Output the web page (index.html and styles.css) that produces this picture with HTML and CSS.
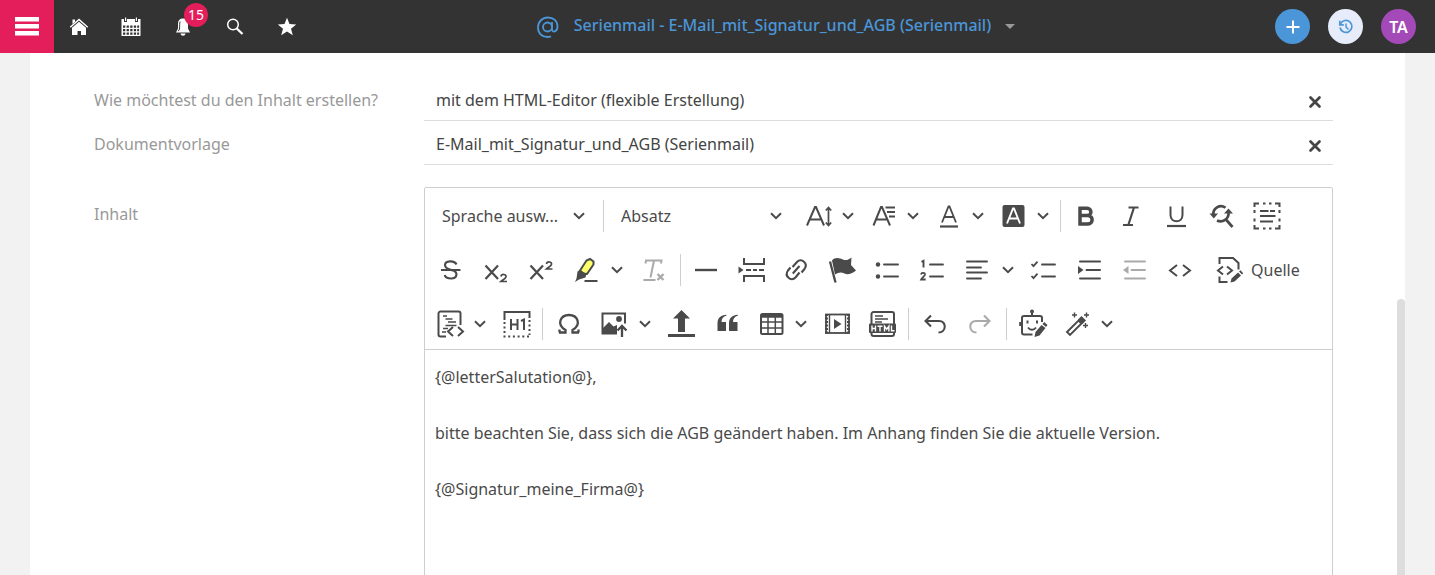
FILE: index.html
```html
<!DOCTYPE html>
<html lang="de">
<head>
<meta charset="utf-8">
<meta name="viewport" content="width=device-width, initial-scale=1">
<title>Serienmail</title>
<link rel="stylesheet" href="styles.css">
</head>
<body>
<svg class="defs" aria-hidden="true">
  <symbol id="chev" viewBox="0 0 12 8"><path d="M1 1.2l5 5 5-5" fill="none" stroke="currentColor" stroke-width="2"/></symbol>
  <symbol id="close" viewBox="0 0 14 14"><path d="M2.500 2.500l9 9M11.500 2.500l-9 9" fill="none" stroke="currentColor" stroke-width="2.700" stroke-linecap="round"/></symbol>
</svg>

<header class="topbar">
  <nav class="nav" aria-label="Hauptnavigation">
    <button class="menu" aria-label="Menü"><svg width="24" height="20" viewBox="0 0 24 20"><path d="M0 0h24v4.500H0zM0 7h24v4.500H0zM0 14h24v4.500H0z" fill="#fff"/></svg></button>
    <button class="navbtn" aria-label="Startseite"><svg width="20" height="20" viewBox="0 0 20 20" fill="#fff"><path d="M0.800 9.800L10 1.500l9.200 8.300-.9 1L10 3.500 1.700 10.800z"/><path d="M3.500 2.500h2.500v2.500L3.500 7z"/><path d="M3 10.800l7-6.100 7 6.100V18h-5v-4H8.500v4H3z"/></svg></button>
    <button class="navbtn" aria-label="Kalender"><svg width="20" height="20" viewBox="0 0 20 20" fill="#fff"><path fill-rule="evenodd" d="M0.500 2H3v3h3V2h8v3h3V2h2.500v17h-19zM2 8.500v2.300h2.300V8.500zM5.600 8.500v2.300h2.300V8.500zM9.200 8.500v2.300h2.300V8.500zM12.800 8.500v2.300h2.300V8.500zM16.200 8.500v2.300h1.900V8.500zM2 12v2.300h2.300V12zM5.600 12v2.300h2.300V12zM9.200 12v2.300h2.300V12zM12.800 12v2.300h2.300V12zM16.200 12v2.300h1.900V12zM2 15.500v2.200h2.300v-2.200zM5.600 15.500v2.200h2.300v-2.200zM9.200 15.500v2.200h2.300v-2.200zM12.800 15.500v2.200h2.300v-2.200zM16.200 15.500v2.200h1.900v-2.200z"/><path d="M4 .5h1.200v3.500H4zM14.800.5H16v3.500h-1.200z"/></svg></button>
    <button class="navbtn" aria-label="Benachrichtigungen, 15 neu"><svg width="20" height="20" viewBox="0 0 20 20"><path d="M9 1.500c-2.500.4-4 2.500-4 5v5L3 15.500h14l-2-4v-5c0-2.500-1.500-4.600-4-5z" fill="#fff"/><path d="M7.200 4.500C6.400 6 6.800 9 6.500 12l-1.200 2.200" fill="none" stroke="#333"/><path d="M7.500 16.500h5c-.3 3-4.700 3-5 0z" fill="#fff"/></svg><span class="count">15</span></button>
    <button class="navbtn" aria-label="Suche"><svg width="20" height="20" viewBox="0 0 20 20" fill="none" stroke="#fff"><circle cx="8" cy="7.500" r="5.300" stroke-width="1.500"/><path d="M11.800 11.500l5.700 5.500" stroke-width="2.300"/></svg></button>
    <button class="navbtn" aria-label="Favoriten"><svg width="20" height="20" viewBox="0 0 20 20"><path d="M10 .8l2.500 6.200 6.700.4-5.200 4.300 1.800 6.500L10 14.600l-5.800 3.600L6 11.700.8 7.400 7.500 7z" fill="#fff"/></svg></button>
  </nav>
  <button class="title"><svg width="24" height="24" viewBox="0 0 24 24" fill="none" stroke="currentColor" stroke-width="1.800"><circle cx="11.500" cy="12" r="4.500"/><path d="M16 7v7.500c0 3.500 5.500 2.500 5.500-3C21.500 6 17.500 2.500 12 2.500S2 6.500 2 12.500s4 9.500 9.500 9.500c1.500 0 2.500-.3 3.500-.7"/></svg><span>Serienmail - E-Mail_mit_Signatur_und_AGB (Serienmail)</span><svg width="10" height="5" viewBox="0 0 10 5"><path d="M0 0h10L5 5z" fill="#999"/></svg></button>
  <div class="actions">
    <button class="round add" aria-label="Neu"><svg width="14" height="14" viewBox="0 0 14 14"><path d="M7 .5v13M.5 7h13" stroke="#fff" stroke-width="2"/></svg></button>
    <button class="round history" aria-label="Verlauf"><svg width="16" height="16" viewBox="0 0 16 16" fill="none" stroke="#4a96d9"><path d="M2.500 4.800A6 6 0 1 1 2 8.500" stroke-width="1.700"/><path d="M1.800 1.800v4h4" stroke-width="1.700"/><path d="M8 4.500V8l2.500 2.500" stroke-width="1.500"/></svg></button>
    <button class="round user">TA</button>
  </div>
</header>

<main class="sheet">
  <form class="form">
    <div class="row">
      <label for="mode">Wie möchtest du den Inhalt erstellen?</label>
      <div class="field"><input id="mode" type="text" value="mit dem HTML-Editor (flexible Erstellung)"><button type="button" class="clear" aria-label="Auswahl löschen"><svg width="14" height="14"><use href="#close"/></svg></button></div>
    </div>
    <div class="row">
      <label for="tpl">Dokumentvorlage</label>
      <div class="field"><input id="tpl" type="text" value="E-Mail_mit_Signatur_und_AGB (Serienmail)"><button type="button" class="clear" aria-label="Vorlage löschen"><svg width="14" height="14"><use href="#close"/></svg></button></div>
    </div>
    <div class="row content">
      <label for="body">Inhalt</label>
      <div class="editor">
        <div class="toolbar" role="toolbar" aria-label="Editor">
          <div class="pick lang"><select aria-label="Sprache auswählen"><option>Sprache ausw...</option></select><svg class="chev"><use href="#chev"/></svg></div>
          <span class="sep"></span>
          <div class="pick style"><select aria-label="Absatzformat"><option>Absatz</option></select><svg class="chev"><use href="#chev"/></svg></div>
          <button type="button" class="tool drop" aria-label="Schriftgröße"><svg class="ico" viewBox="0 0 28 28"><path d="M2 23.500L10 5h1l8 18.500M5 17.500h11" stroke-width="2"/><path d="M23.500 6v17M20.800 8.500L23.500 5.500l2.700 3M20.800 20.500l2.700 3 2.700-3" stroke-width="1.700"/></svg><svg class="chev"><use href="#chev"/></svg></button>
          <button type="button" class="tool drop" aria-label="Schriftart"><svg class="ico" viewBox="0 0 28 28"><path d="M3.500 23.500L11 5h1l8 18.500M6.500 17.500h11" stroke-width="2"/><path d="M15.500 5.500H25M17 10h8M19 14.500h6" stroke-width="2"/></svg><svg class="chev"><use href="#chev"/></svg></button>
          <button type="button" class="tool drop" aria-label="Schriftfarbe"><svg class="ico" viewBox="0 0 28 28"><path d="M7 20.500L13.500 4.500h1L21 20.500M9.500 15h9" stroke-width="1.800"/><path d="M5 24.500h18" stroke-width="2.200"/></svg><svg class="chev"><use href="#chev"/></svg></button>
          <button type="button" class="tool drop" aria-label="Hintergrundfarbe"><svg class="ico" viewBox="0 0 28 28"><rect x="2.500" y="3" width="22" height="22" rx="2" class="f"/><path d="M7 21.500L13 6.500h1l6 15M9 16.500h9" style="stroke:#fff" stroke-width="1.900"/></svg><svg class="chev"><use href="#chev"/></svg></button>
          <span class="sep"></span>
          <button type="button" class="tool" aria-label="Fett"><svg class="ico" viewBox="0 0 28 28"><path d="M5.500 6.300h8.500c5.200 0 5.200 7.200 0 7.200H6.500M6.500 13.500H15c5.500 0 5.500 8.500 0 8.500H5.500M7 4.700v18.900" stroke-width="3.500"/></svg></button>
          <button type="button" class="tool" aria-label="Kursiv"><svg class="ico" viewBox="0 0 28 28"><path d="M10.500 5.500h10M5 23h10M16 5.500L10.300 23" stroke-width="2.200"/></svg></button>
          <button type="button" class="tool" aria-label="Unterstrichen"><svg class="ico" viewBox="0 0 28 28"><path d="M7.500 4.500v8.500c0 8.300 12 8.300 12 0V4.500" stroke-width="2"/><path d="M4 24h19" stroke-width="2.200"/></svg></button>
          <button type="button" class="tool" aria-label="Suchen und ersetzen"><svg class="ico" viewBox="0 0 28 28"><path d="M5.500 13A7.500 7.500 0 0 1 17.500 5.800M20.500 10.500A8 8 0 0 1 9 18.500M17.500 17l7 8" stroke-width="2.700"/><path d="M1.500 11.500h8.500L5.800 16.500zM16 11.500l4.500-5 4.500 5z" class="f"/></svg></button>
          <button type="button" class="tool" aria-label="Alles auswählen"><svg class="ico" viewBox="0 0 28 28"><path d="M1.500 5V1.500H6M22 1.500h4.500V5M26.500 23v3.500H22M6 26.500H1.500V23M10 1.500h2.500M16 1.500h2.500M10 26.500h2.500M16 26.500h2.500M1.500 8v3M1.500 16.500v3M26.500 8v3M26.500 16.500v3" stroke-width="2"/><path d="M7 9h8.500M17 9h5M7 14h15.500M7 19.500h13" stroke-width="2"/></svg></button>

          <button type="button" class="tool" aria-label="Durchgestrichen"><svg class="ico" viewBox="0 0 28 28"><path d="M19.500 8.500C17.500 4 8 4.500 8 9c0 3.500 4 4.500 7 5.200 7 1.800 5 8.300-.8 8.300-4 0-6-1.500-6.500-3.500" stroke-width="2.100"/><path d="M4 14h19.500" stroke-width="2"/></svg></button>
          <button type="button" class="tool" aria-label="Tiefgestellt"><svg class="ico" viewBox="0 0 28 28"><path d="M3.500 9.500l12.500 13.500M16 9.500L3.500 23" stroke-width="2.200"/><path d="M19 20.500c.5-3 5.500-2.500 5 .3-.3 1.700-3 3-5 4.700h6" stroke-width="1.700"/></svg></button>
          <button type="button" class="tool" aria-label="Hochgestellt"><svg class="ico" viewBox="0 0 28 28"><path d="M3.500 9.500l12.500 13.500M16 9.500L3.500 23" stroke-width="2.200"/><path d="M19.500 8c.5-3 5.500-2.500 5 .3-.3 1.700-3 3-5 4.700h6" stroke-width="1.700"/></svg></button>
          <div class="split"><button type="button" class="tool" aria-label="Hervorheben"><svg class="ico" viewBox="0 0 28 28"><path d="M8 14.500L14.500 4.500l3.500-1.500 3.500 2.500v3L15 18l-4-.5z" style="fill:#fdff6b" stroke-width="2"/><path d="M5.500 15.500l2.500-1.500 6.500 4-1 3.500-6.500 2-4 2.500 1.500-3.500z" class="f"/><path d="M12.500 25h13" stroke-width="2"/></svg></button><button type="button" class="tool arrow" aria-label="Hervorheben Optionen"><svg class="chev"><use href="#chev"/></svg></button></div>
          <button type="button" class="tool off" aria-label="Formatierung entfernen" disabled><svg class="ico" viewBox="0 0 28 28"><path d="M5.500 7.500l.5-3h15.500l-.5 3M14 4.500l-3.500 17M3.500 24h12" stroke-width="2"/><path d="M17.500 18l6 6M23.500 18l-6 6" stroke-width="2.400"/></svg></button>
          <span class="sep"></span>
          <button type="button" class="tool" aria-label="Horizontale Linie"><svg class="ico" viewBox="0 0 28 28"><path d="M2 14h22" stroke-width="2.400"/></svg></button>
          <button type="button" class="tool" aria-label="Seitenumbruch"><svg class="ico" viewBox="0 0 28 28"><path d="M6 2v6h20V2M6 26v-6h20v6" stroke-width="2"/><path d="M8 14h5M15 14h4M21 14h5" stroke-width="2"/><path d="M0.500 10.500L5.500 14l-5 3.500z" class="f"/></svg></button>
          <button type="button" class="tool" aria-label="Link"><svg class="ico" viewBox="0 0 28 28"><path d="M9.500 11l4.500-5c4.500-4.500 11.500 1.500 7.500 7l-3 3.500M16.500 16.500L12.500 21.500C8 26 1 20 5 14.500l2.500-3M9.800 17.500l6.700-7.500" stroke-width="2.100"/></svg></button>
          <button type="button" class="tool" aria-label="Textmarke"><svg class="ico" viewBox="0 0 28 28"><path d="M2 5.500L7.500 26.500" stroke-width="2.300"/><path d="M4 4.500C7 .5 12 2 15 3.500s6 0 8.500-2L23 9l5 5.500c-5 4-9 4.500-12 2.800s-6-.8-9 1.200z" class="f"/></svg></button>
          <button type="button" class="tool" aria-label="Aufzählung"><svg class="ico" viewBox="0 0 28 28"><circle cx="5" cy="8.500" r="2.200" class="f"/><circle cx="5" cy="20.500" r="2.200" class="f"/><path d="M11 8.500h14M11 20.500h14" stroke-width="1.900" stroke-linecap="round"/></svg></button>
          <button type="button" class="tool" aria-label="Nummerierte Liste"><svg class="ico" viewBox="0 0 28 28"><path d="M3.500 5.800l2-1v6.700" stroke-width="1.900"/><path d="M3 18.500c.5-2.500 4.500-2 3.900.3-.4 1.400-2.500 2.500-3.700 4.700h4.500" stroke-width="1.800"/><path d="M12 8.500h13M12 20.500h13" stroke-width="1.900" stroke-linecap="round"/></svg></button>
          <div class="split"><button type="button" class="tool" aria-label="Ausrichtung"><svg class="ico" viewBox="0 0 28 28"><path d="M4 5.500h20M4 11.500h14M4 16.500h20M4 22.500h14" stroke-width="1.900" stroke-linecap="round"/></svg></button><button type="button" class="tool arrow" aria-label="Ausrichtung Optionen"><svg class="chev"><use href="#chev"/></svg></button></div>
          <button type="button" class="tool" aria-label="Aufgabenliste"><svg class="ico" viewBox="0 0 28 28"><path d="M0.500 8l2 2.200 4-4.500M0.500 20l2 2.200 4-4.500" stroke-width="1.800"/><path d="M11 8.500h13M11 20.500h13" stroke-width="1.900" stroke-linecap="round"/></svg></button>
          <button type="button" class="tool" aria-label="Einzug vergrößern"><svg class="ico" viewBox="0 0 28 28"><path d="M4 5.500h20M10.500 14H24M4 22.500h20" stroke-width="2" stroke-linecap="round"/><path d="M2 10l5.500 4L2 18z" class="f"/></svg></button>
          <button type="button" class="tool off" aria-label="Einzug verkleinern" disabled><svg class="ico" viewBox="0 0 28 28"><path d="M4 5.500h20M10.500 14H24M4 22.500h20" stroke-width="2" stroke-linecap="round"/><path d="M7.500 10L2 14l5.500 4z" class="f"/></svg></button>
          <button type="button" class="tool" aria-label="Code"><svg class="ico" viewBox="0 0 28 28"><path d="M11 9l-7 5.500 7 5.500M17 9l7 5.500-7 5.500" stroke-width="2"/></svg></button>
          <button type="button" class="tool source"><svg class="ico" viewBox="0 0 28 28"><path d="M4.500 8V2H18l5.500 5v6.500M4.500 20.500V26h8" stroke-width="2"/><path d="M8 10.500l-5 4 5 4M12 10.500l5 4-5 4" stroke-width="2"/><path d="M15.500 26.500l1-4 6.500-6 3 3-6.500 6zM24 15.500l1.500-1.200 2.700 2.900-1.200 1.300z" class="f"/></svg><span>Quelle</span></button>

          <button type="button" class="tool drop" aria-label="Codeblock"><svg class="ico" viewBox="0 0 28 28"><path d="M9 26.500H3.500a2 2 0 0 1-2-2v-21a2 2 0 0 1 2-2h18a2 2 0 0 1 2 2V15" stroke-width="2"/><path d="M6 6h4M8.500 9h7M11 12h8M8.500 15.500h11M6 18.500h5M5 22h4" stroke-width="1.600"/><path d="M16 17l-5 4.500 5 4.500M21 17l5 4.500-5 4.500" stroke-width="2"/></svg><svg class="chev"><use href="#chev"/></svg></button>
          <button type="button" class="tool" aria-label="Blöcke anzeigen"><svg class="ico" viewBox="0 0 28 28"><path d="M2.500 10V2h25v6" stroke-width="2"/><path d="M2.500 12v13M27.500 10v15" stroke-width="2" stroke-dasharray="2 2.500"/><path d="M1.500 26.500h27" stroke-width="2" stroke-dasharray="2 2.700"/><path d="M9 9v11M15.500 9v11M9 14.500h6.500M19 11l3-1.500V20" stroke-width="2"/></svg></button>
          <span class="sep"></span>
          <button type="button" class="tool" aria-label="Sonderzeichen"><svg class="ico" viewBox="0 0 28 28"><path d="M4 22.500h6.500v-2.500C1 14.500 5.500 5 14 5s13 9.500 3.500 15v2.500H24M4.500 19.500v3M23.500 19.500v3" stroke-width="2.300"/></svg></button>
          <div class="split"><button type="button" class="tool" aria-label="Bild einfügen"><svg class="ico" viewBox="0 0 28 28"><path d="M17 23.500H2.500V3.500h22.500v10" stroke-width="2"/><path d="M2.500 18.500L9 12l4.500 4.500L17 15v9H2.500z" class="f"/><circle cx="19" cy="9" r="2.900" class="f"/><path d="M22 27V17M17.500 20.500L22 16l4.500 4.500" stroke-width="2.300"/></svg></button><button type="button" class="tool arrow" aria-label="Bild Optionen"><svg class="chev"><use href="#chev"/></svg></button></div>
          <button type="button" class="tool" aria-label="Hochladen"><svg class="ico" viewBox="0 0 28 28"><path d="M0 25.500h27" stroke-width="3"/><path d="M13.500 0l8.500 8.500h-5V22h-7V8.500H5z" class="f"/></svg></button>
          <button type="button" class="tool" aria-label="Zitat"><svg class="ico" viewBox="0 0 28 28"><path d="M13.500 5.500C10 6.500 8.500 9 8.500 12h4.500v9H4.500v-8c0-5 3-8 9-8.300zM25 5.500c-3.500 1-5 3.500-5 6.500h4.500v9H16v-8c0-5 3-8 9-8.300z" class="f"/></svg></button>
          <button type="button" class="tool drop" aria-label="Tabelle"><svg class="ico" viewBox="0 0 28 28"><rect x="3" y="4" width="21.500" height="20" rx="1.500" stroke-width="2"/><path d="M3 6h21.500" stroke-width="3.500"/><path d="M3 12h21.500M3 18h21.500M10 7v17M17.300 7v17" stroke-width="1.500"/></svg><svg class="chev"><use href="#chev"/></svg></button>
          <button type="button" class="tool" aria-label="Video"><svg class="ico" viewBox="0 0 28 28"><path d="M3.500 4v20M25.500 4v20" stroke-width="3" stroke-dasharray="2 1.500"/><rect x="3" y="4.500" width="23" height="18.500" stroke-width="1.800"/><path d="M6.500 5v18M22.500 5v18" stroke-width="1.400"/><path d="M11 9l7.500 5-7.500 5z" class="f"/></svg></button>
          <button type="button" class="tool" aria-label="HTML einfügen"><svg class="ico" viewBox="0 0 28 28"><path d="M3.500 14V4a2 2 0 0 1 2-2h18.500a2 2 0 0 1 2 2v10M3.500 22v2a2 2 0 0 0 2 2h18.500a2 2 0 0 0 2-2v-2" stroke-width="2"/><path d="M7 6h8M7 9h13M7 12h7" stroke-width="1.600"/><rect x="1" y="13.500" width="27" height="9.500" rx="1" class="f"/><path d="M4 15.500v6M7.500 15.500v6M4 18.500h3.500M9.500 16.200h5M12 16v5.500M16.500 21.500v-5.300l2.200 3 2.200-3v5.300M23.500 15.500v5.300h3" style="stroke:#fff" stroke-width="1.400"/></svg></button>
          <span class="sep"></span>
          <button type="button" class="tool" aria-label="Rückgängig"><svg class="ico" viewBox="0 0 28 28"><path d="M10 5.500L4.500 11l5.500 5.500M4.500 11H18c8 0 7.500 11.500-.5 11.500" stroke-width="2.100"/></svg></button>
          <button type="button" class="tool off" aria-label="Wiederholen" disabled><svg class="ico" viewBox="0 0 28 28"><path d="M18 5.500l5.500 5.500-5.500 5.500M23.500 11H10c-8 0-7.500 11.500.5 11.500" stroke-width="2.100"/></svg></button>
          <span class="sep"></span>
          <button type="button" class="tool" aria-label="KI-Assistent"><svg class="ico" viewBox="0 0 28 28"><path d="M13.500 24.500H5a2 2 0 0 1-2-2V8a2 2 0 0 1 2-2h16a2 2 0 0 1 2 2v4M13 6V2M1.200 12v4" stroke-width="2"/><circle cx="13" cy="1.500" r="2" class="f"/><path d="M8.500 10.500v3M18 10.500v3" stroke-width="2"/><path d="M9 17.500c2 3 6 3 8 0" stroke-width="1.800"/><path d="M15.500 27l1-5 6-7 4 3L20.500 25.500zM23.500 14l1.700-1.900 3.300 3-1.500 2z" class="f"/></svg></button>
          <button type="button" class="tool drop" aria-label="KI-Befehle"><svg class="ico" viewBox="0 0 28 28"><path d="M3 22l11.500-11.500 3 3L6 25z" stroke-width="1.900"/><path d="M14 9.500l3.500-3.500 4.500 4.500-3.500 3.500z" class="f"/><path d="M10.500 2.500v5M8 5h5M22.500 2.500v5M20 5h5M21.500 13v5M19 15.500h5" stroke-width="1.400"/></svg><svg class="chev"><use href="#chev"/></svg></button>
        </div>
        <textarea id="body" spellcheck="false" rows="8">{@letterSalutation@},

bitte beachten Sie, dass sich die AGB geändert haben. Im Anhang finden Sie die aktuelle Version.

{@Signatur_meine_Firma@}</textarea>
      </div>
    </div>
  </form>
</main>
<div class="scrollbar" aria-hidden="true"></div>
</body>
</html>
```
FILE: styles.css
```css
* { box-sizing: border-box; }
html { height: 100%; }
body {
  margin: 0;
  height: 100%;
  display: flex;
  flex-direction: column;
  overflow: hidden;
  background: #f2f2f2;
  color: #444;
  font: 16px/24px "Noto Sans", sans-serif;
}
button, input, select, textarea { font: inherit; color: inherit; border: 0; background: none; padding: 0; margin: 0; outline: 0; }
button { cursor: pointer; }
svg { display: block; flex: none; }
.defs { position: absolute; width: 0; height: 0; }

.topbar {
  flex: none;
  height: 53px;
  display: grid;
  grid-template-columns: 1fr auto 1fr;
  align-items: center;
  background: #333;
}
.nav { display: flex; align-items: center; height: 53px; }
.menu { width: 54px; height: 53px; display: grid; place-items: center; background: #e31e5a; }
.navbtn { position: relative; width: 52px; height: 53px; display: grid; place-items: center; }
.menu + .navbtn { margin-left: -1px; }
.count {
  position: absolute;
  left: 27px;
  top: 3px;
  width: 24px;
  height: 24px;
  border-radius: 50%;
  background: #e31e5a;
  color: #fff;
  font-size: 14px;
  line-height: 24px;
}
.title { display: flex; align-items: center; gap: 14px; margin-left: 116px; color: #4a96d9; font-weight: 500; white-space: nowrap; }
.title span { padding-bottom: 4px; }
.actions { display: flex; justify-content: flex-end; gap: 18px; padding-right: 19px; }
.round { width: 35px; height: 35px; border-radius: 50%; display: grid; place-items: center; color: #fff; font-weight: 600; }
.add { background: #4a96d9; }
.history { background: #e6ecfa; }
.user { background: #a349b8; }

.sheet { flex: 1; min-height: 0; margin: 0 30px; padding: 24px 72px 0 64px; background: #fff; }
.row { display: grid; grid-template-columns: 330px 1fr; }
.row > label { padding-top: 11px; color: #999; }
.field { display: flex; align-items: center; height: 44px; padding: 3px 11px 0 12px; border-bottom: 1px solid #ddd; }
.field input { flex: 1; min-width: 0; height: 24px; }
.clear { padding-top: 3px; }
.content { margin-top: 22px; }
.content > label { padding-top: 15px; }

.editor { min-width: 0; border: 1px solid #ccced1; border-radius: 2px; color: #4a4a4a; }
.toolbar { display: flex; flex-wrap: wrap; align-items: center; gap: 14px 5px; padding: 8px 6px 5px; border-bottom: 1px solid #ccced1; }
.tool { width: 40px; height: 40px; display: flex; align-items: center; padding: 0 6px; }
.drop { width: 60px; gap: 9px; }
.split { display: flex; }
.arrow { width: 23px; padding: 0 5px; }
.source { width: auto; padding: 0 10px; gap: 8px; }
.off { color: #aaa; }
.ico { width: 28px; height: 28px; fill: none; stroke: currentColor; overflow: visible; }
.ico .f { fill: currentColor; stroke: none; }
.chev { width: 12px; height: 8px; }
.sep { width: 1px; height: 32px; margin: 0 1px; background: #ccced1; }
.pick { display: flex; align-items: center; height: 40px; }
.pick select { appearance: none; width: 100%; height: 40px; padding: 0 30px 0 11px; }
.pick .chev { margin-left: -24px; margin-right: 12px; pointer-events: none; }
.lang { width: 166px; }
.style { width: 184px; }
textarea { display: block; width: 100%; padding: 13px 10px; resize: none; line-height: 28px; overflow: hidden; }

.scrollbar { position: fixed; right: 30px; top: 299px; bottom: 0; width: 8px; border-radius: 4px 4px 0 0; background: #ddd; }
```
